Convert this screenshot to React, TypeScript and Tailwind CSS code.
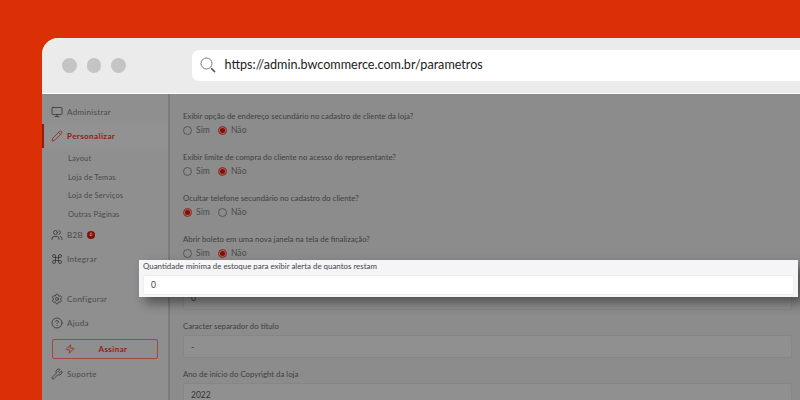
import { Monitor, Pencil, Users, Command, Settings, CircleHelp, Wrench, Zap } from "lucide-react";

const font = "font-['Lato','Noto_Sans',sans-serif]";

function Radio({ on, label }: { on: boolean; label: string }) {
  return (
    <span className="flex items-center gap-[4px]">
      <span className={`flex h-[9px] w-[9px] items-center justify-center rounded-full border ${on ? "border-[#8c2a22] bg-[#9a6a66]" : "border-[#555]"}`}>
        {on && <span className="h-[5px] w-[5px] rounded-full bg-[#860e05]" />}
      </span>
      <span className="text-[8.5px] tracking-[0.1px] text-[#4a4a4a]">{label}</span>
    </span>
  );
}

function Choices({ yes }: { yes?: boolean }) {
  return (
    <div className="flex h-[14px] items-center gap-[8px]">
      <Radio on={!!yes} label="Sim" />
      <Radio on={!yes} label="Não" />
    </div>
  );
}

function Question({ text, yes }: { text: string; yes?: boolean }) {
  return (
    <div className="flex h-[41px] flex-col">
      <div className="flex h-[14px] items-center pt-[1px] text-[7.8px] text-[#3f3f3f]">{text}</div>
      <Choices yes={yes} />
    </div>
  );
}

function NavItem({ icon, label, active }: { icon: React.ReactNode; label: string; active?: boolean }) {
  return (
    <div className={`flex h-[24px] items-center gap-[4px] ${active ? "border-l-2 border-[#8f1d13] bg-[#929292] pl-[6px] text-[8px] font-bold tracking-[0.4px] text-[#8f1d13]" : "pl-[8px] text-[8px] tracking-[0.3px] text-[#4a4a4a]"}`}>
      <span className={`flex w-[13px] justify-center ${active ? "text-[#8f1d13]" : "text-[#2f2f2f]"}`}>{icon}</span>
      {label}
    </div>
  );
}

function Sub({ label }: { label: string }) {
  return <div className="flex h-[18.6px] items-center pl-[26px] text-[7.5px] tracking-[0.15px] text-[#4a4a4a]">{label}</div>;
}

function Field({ label, value }: { label: string; value: string }) {
  return (
    <div className="mb-[8px]">
      <div className="flex h-[17px] items-center text-[7.8px] text-[#3f3f3f]">{label}</div>
      <div className="flex h-[23px] items-center rounded-[2px] border border-[#868686] bg-[#909090] pl-[7px] pt-[2px] text-[8.5px] text-[#333]">{value}</div>
    </div>
  );
}

export default function App() {
  return (
    <div className={`h-[400px] w-[800px] overflow-hidden bg-[#db2f05] pl-[42px] pt-[38px] ${font}`}>
      <div className="flex h-[362px] flex-col overflow-hidden rounded-tl-[16px] bg-[#8c8c8c]">
        <header className="relative z-10 flex h-[55.5px] shrink-0 items-center border-b-[1.5px] border-white bg-[#ebebeb] pl-[20px]">
          <div className="flex gap-[10px]">
            <span className="h-[14.5px] w-[14.5px] rounded-full bg-[#c4c4c4]" />
            <span className="h-[14.5px] w-[14.5px] rounded-full bg-[#c4c4c4]" />
            <span className="h-[14.5px] w-[14.5px] rounded-full bg-[#c4c4c4]" />
          </div>
          <div className="ml-[66px] flex h-[31px] flex-1 items-center rounded-l-[7px] bg-white pl-[8px]">
            <svg width="16" height="16" viewBox="0 0 16 16" fill="none">
              <circle cx="6.5" cy="6.5" r="5.5" stroke="#777" strokeWidth="1" />
              <path d="M11.6 11.6L14.6 14.6" stroke="#555" strokeWidth="1.5" strokeLinecap="round" />
            </svg>
            <span className="ml-[9px] text-[12.6px] text-[#222]">https://admin.bwcommerce.com.br/parametros</span>
          </div>
        </header>
        <div className="flex flex-1">
          <aside className="w-[128px] shrink-0 border-r-2 border-[#7b7b7b] bg-[#8f8f8f] pt-[6px]">
            <NavItem icon={<Monitor size={12} strokeWidth={1.5} />} label="Administrar" />
            <NavItem icon={<Pencil size={12} strokeWidth={1.5} />} label="Personalizar" active />
            <div className="-mb-[1px] pt-[2px]">
              <Sub label="Layout" />
              <Sub label="Loja de Temas" />
              <Sub label="Loja de Serviços" />
              <Sub label="Outras Páginas" />
            </div>
            <div className="flex h-[24px] items-center">
              <NavItem icon={<Users size={12} strokeWidth={1.5} />} label="B2B" />
              <span className="ml-[4px] flex h-[8px] w-[8px] items-center justify-center rounded-full bg-[#860e05] text-[5px] text-[#bbb]">6</span>
            </div>
            <NavItem icon={<Command size={12} strokeWidth={1.5} />} label="Integrar" />
            <div className="h-[16px]" />
            <NavItem icon={<Settings size={12} strokeWidth={1.5} />} label="Configurar" />
            <NavItem icon={<CircleHelp size={12} strokeWidth={1.5} />} label="Ajuda" />
            <div className="mx-[10px] mt-[4px] flex h-[20px] items-center rounded-[2px] border border-[#9c4a40] pl-[12px] text-[8px] font-bold tracking-[0.4px] text-[#8f1d13]">
              <Zap size={10} strokeWidth={1.7} />
              <span className="flex-1 pr-[6px] text-center">Assinar</span>
            </div>
            <div className="h-[3px]" />
            <NavItem icon={<Wrench size={12} strokeWidth={1.5} />} label="Suporte" />
          </aside>
          <main className="-mt-[11.5px] flex-1 pl-[13px] pr-[8px]">
            <div className="mb-[13px]">
              <Choices />
            </div>
            <Question text="Exibir opção de endereço secundário no cadastro de cliente da loja?" />
            <Question text="Exibir limite de compra do cliente no acesso do representante?" />
            <Question text="Ocultar telefone secundário no cadastro do cliente?" yes />
            <Question text="Abrir boleto em uma nova janela na tela de finalização?" />
            <div className="mb-[8px] mt-[14px] flex h-[23px] items-center rounded-[2px] border border-[#868686] bg-[#909090] pl-[7px] text-[8.5px] text-[#333]">0</div>
            <Field label="Caracter separador do título" value="-" />
            <Field label="Ano de início do Copyright da loja" value="2022" />
          </main>
        </div>
      </div>
      <div className="absolute left-[139px] top-[260px] h-[37px] w-[659px] bg-[#f5f5f8] px-[4px] shadow-[6px_6px_12px_rgba(0,0,0,0.45)]">
        <div className="flex h-[15px] items-center pb-[2px] text-[7.9px] text-[#444]">Quantidade mínima de estoque para exibir alerta de quantos restam</div>
        <div className="flex h-[20px] items-center rounded-[2px] border border-[#eeeeee] bg-white pl-[7px] text-[8.5px] text-[#444]">0</div>
      </div>
    </div>
  );
}
